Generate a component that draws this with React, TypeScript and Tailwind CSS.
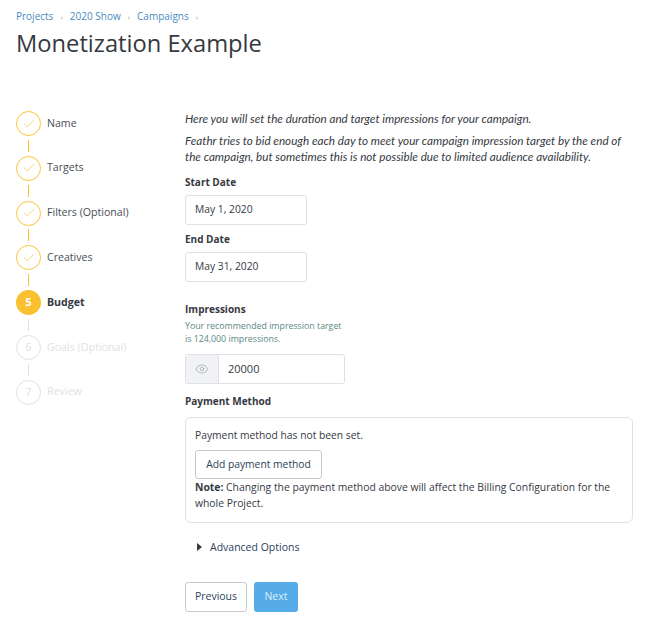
import { Check, Eye } from "lucide-react";

const steps = [
  { label: "Name", state: "done" },
  { label: "Targets", state: "done" },
  { label: "Filters (Optional)", state: "done" },
  { label: "Creatives", state: "done" },
  { label: "Budget", state: "active", n: 5 },
  { label: "Goals (Optional)", state: "todo", n: 6 },
  { label: "Review", state: "todo", n: 7 },
];

const Step = ({ step, last }: { step: (typeof steps)[number]; last: boolean }) => {
  const lineColor = step.state === "done" ? "bg-[#fbc02d]" : "bg-[#dfe1e6]";
  return (
    <div className="flex flex-col">
      <div className="flex items-center h-[25px] gap-[6px]">
        {step.state === "done" && (
          <div className="w-[25px] h-[25px] rounded-full border-[1.5px] border-[#f9c433] flex items-center justify-center">
            <Check size={14} strokeWidth={1.1} className="text-[#f2b92c]" />
          </div>
        )}
        {step.state === "active" && (
          <div className="w-[25px] h-[25px] rounded-full bg-[#f9c02f] flex items-center justify-center text-white text-[11px] font-bold">
            {step.n}
          </div>
        )}
        {step.state === "todo" && (
          <div className="w-[25px] h-[25px] rounded-full border-[1.5px] border-[#dfe1e6] flex items-center justify-center text-[#dfe1e6] text-[11px]">
            {step.n}
          </div>
        )}
        <span
          className={
            step.state === "active"
              ? "text-[10.6px] font-bold text-[#36393f]"
              : step.state === "done"
                ? "text-[10.6px] text-[#4a4e55]"
                : "text-[10.6px] text-[#dfe1e6]"
          }
        >
          {step.label}
        </span>
      </div>
      {!last && (
        <div className="h-[19.8px] w-[25px] flex justify-center items-center">
          <div className={`w-px h-[12px] ${lineColor}`} />
        </div>
      )}
    </div>
  );
};

const Field = ({ label, value }: { label: string; value: string }) => (
  <div className="flex flex-col">
    <label className="text-[10px] font-bold text-[#36393f] leading-[14px] mb-[6px]">{label}</label>
    <div className="w-[122px] h-[30px] border border-[#dfe1e6] rounded-[3px] flex items-center px-[9px] text-[10.3px] text-[#36393f]">
      {value}
    </div>
  </div>
);

export default function App() {
  return (
    <div className="w-[656px] h-[620px] bg-white overflow-hidden font-['Open_Sans',sans-serif] px-4 pt-[9px]">
      <nav className="flex items-center text-[10px] text-[#4a8ac0] leading-[15px]">
        <span>Projects</span>
        <span className="mx-[7px] text-[#9aa0a8] text-[8px]">›</span>
        <span>2020 Show</span>
        <span className="mx-[7px] text-[#9aa0a8] text-[8px]">›</span>
        <span>Campaigns</span>
        <span className="mx-[7px] text-[#9aa0a8] text-[8px]">›</span>
      </nav>
      <h1 className="text-[23.7px] leading-[32px] text-[#36393f] mt-[3px] font-normal">Monetization Example</h1>

      <div className="flex mt-[51px]">
        <div className="w-[169px] shrink-0 pt-[1px]">
          {steps.map((s, i) => (
            <Step key={s.label} step={s} last={i === steps.length - 1} />
          ))}
        </div>

        <div className="w-[448px] flex flex-col">
          <p className="font-['Lato',sans-serif] text-[11.7px] italic text-[#36393f] leading-[16px]">
            Here you will set the duration and target impressions for your campaign.
          </p>
          <p className="font-['Lato',sans-serif] text-[11.7px] italic text-[#36393f] leading-[16px] mt-[6px]">
            Feathr tries to bid enough each day to meet your campaign impression target by the end of the campaign, but
            sometimes this is not possible due to limited audience availability.
          </p>
          <div className="mt-[11px] flex flex-col gap-[7px]">
            <Field label="Start Date" value="May 1, 2020" />
            <Field label="End Date" value="May 31, 2020" />
          </div>

          <label className="text-[10px] font-bold text-[#36393f] leading-[14px] mt-[20px]">Impressions</label>
          <p className="text-[8.8px] text-[#5b8a86] leading-[13px] mt-[4px]">
            Your recommended impression target
            <br />
            is 124,000 impressions.
          </p>
          <div className="w-[160px] h-[30px] mt-[8px] border border-[#dfe1e6] rounded-[3px] flex items-center">
            <div className="w-[33px] h-full bg-[#f1f2f5] border-r border-[#dfe1e6] flex items-center justify-center">
              <Eye size={14} strokeWidth={1} className="text-[#8e939b]" />
            </div>
            <span className="pl-[9px] text-[11px] text-[#36393f]">20000</span>
          </div>

          <label className="text-[10px] font-bold text-[#36393f] leading-[14px] mt-[10px]">Payment Method</label>
          <div className="w-[448px] h-[106px] mt-[9px] border border-[#dfe1e6] rounded-[6px] px-[9px] pt-[9px]">
            <p className="text-[10.3px] text-[#36393f] leading-[16px]">Payment method has not been set.</p>
            <button className="block h-[29px] w-[127px] mt-[7px] border border-[#c5c9d1] rounded-[3px] text-[10.3px] text-[#2c4259]">
              Add payment method
            </button>
            <p className="text-[10.35px] text-[#36393f] leading-[16px]">
              <b>Note:</b> Changing the payment method above will affect the Billing Configuration for the whole Project.
            </p>
          </div>

          <div className="flex items-center mt-[16px] pl-[12px] text-[10.5px] text-[#2c4259] leading-[16px]">
            <span className="w-0 h-0 border-y-[4px] border-y-transparent border-l-[5px] border-l-[#36393f] mr-[8px]" />
            Advanced Options
          </div>

          <div className="flex gap-[7px] mt-[27px]">
            <button className="h-[30px] w-[62px] border border-[#c5c9d1] rounded-[3px] text-[10.5px] text-[#2c4259]">
              Previous
            </button>
            <button className="h-[30px] w-[44px] bg-[#55ace6] rounded-[3px] text-[10.5px] text-[#dceefa]">Next</button>
          </div>
        </div>
      </div>
    </div>
  );
}
